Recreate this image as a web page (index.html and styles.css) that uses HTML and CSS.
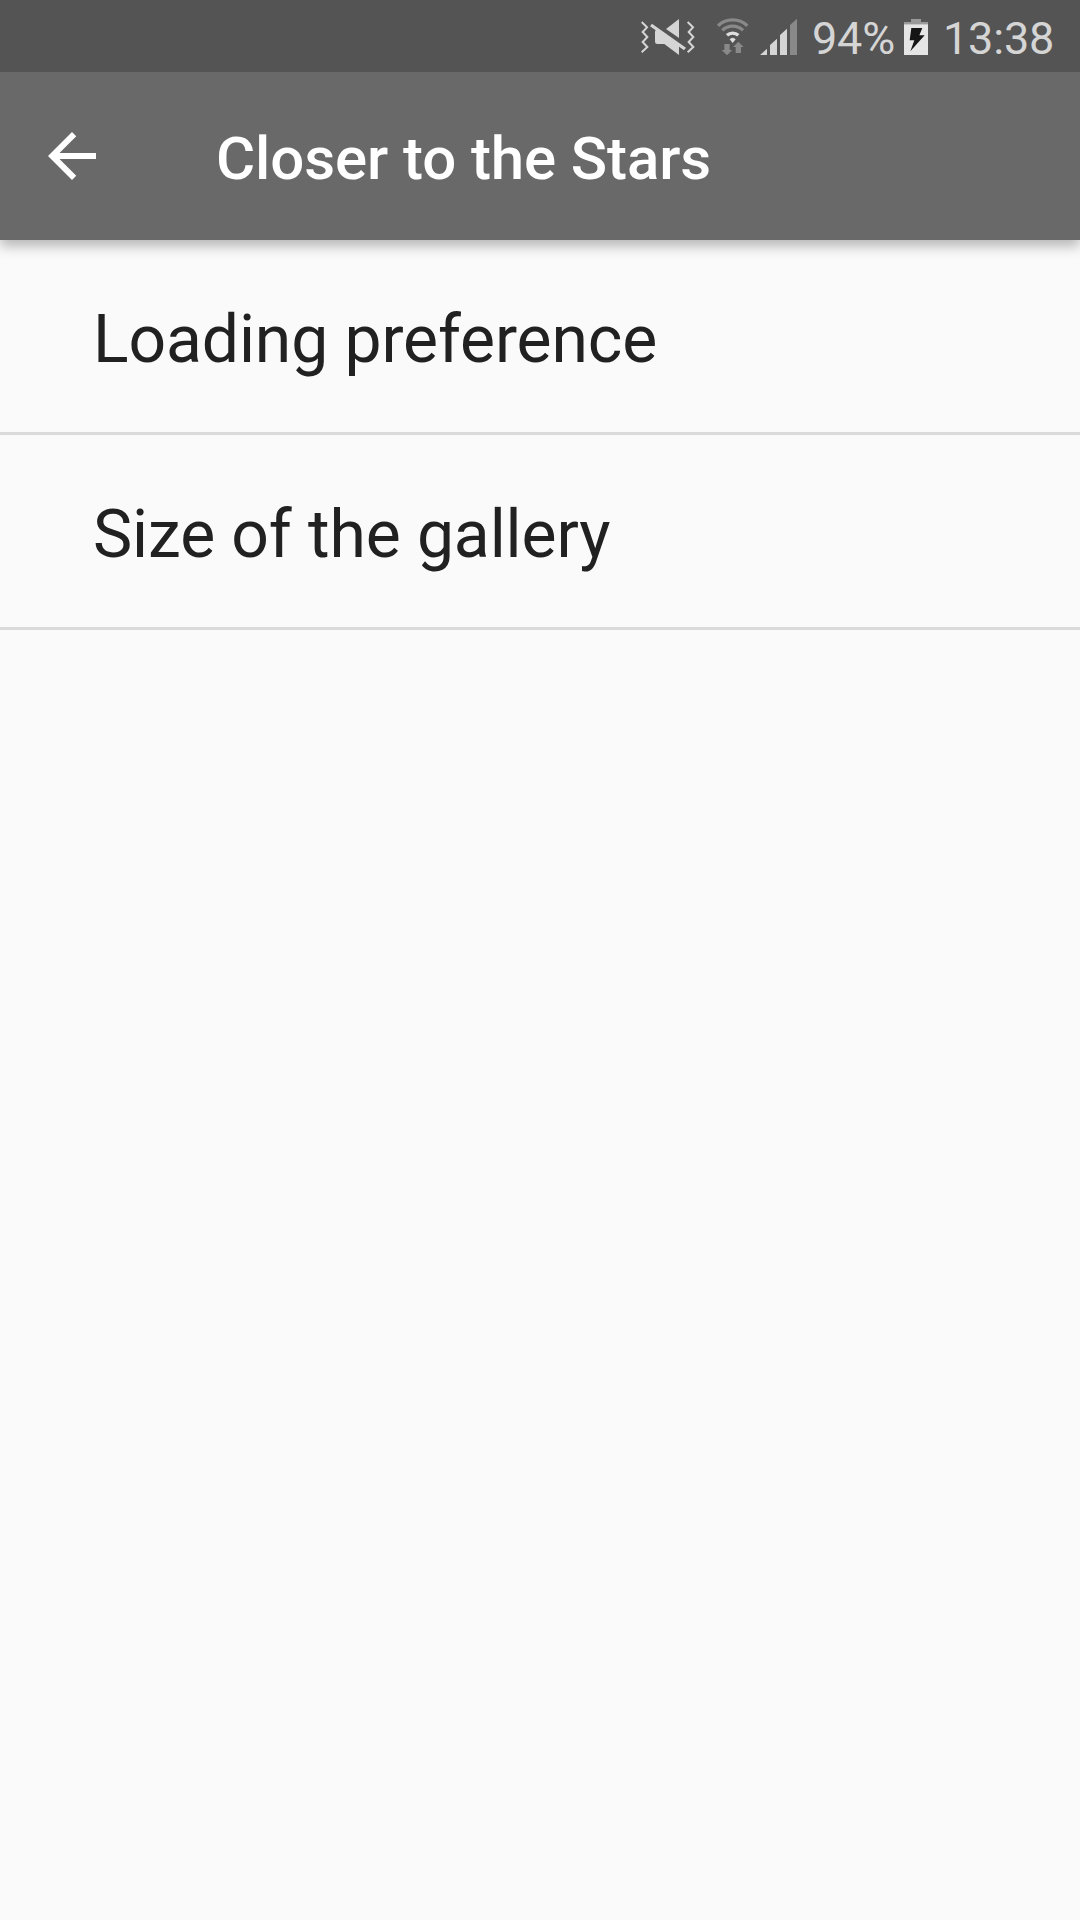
FILE: index.html
```html
<!DOCTYPE html>
<html lang="en">
<head>
<meta charset="utf-8">
<title>Closer to the Stars</title>
<link rel="stylesheet" href="styles.css">
</head>
<body>
<div class="status-bar">
  <svg class="icon-mute" viewBox="33 54 165 114" aria-hidden="true">
    <g fill="none" stroke="#d5d5d5" stroke-width="6">
      <path d="M35 66 51 82 38 96 52 111 38 126 52 141 35 157"/>
      <path d="M173 66 189 82 176 96 190 111 176 126 190 141 173 157"/>
    </g>
    <path fill="#d5d5d5" d="M108 87 147 57V114ZM79 90H86L147 134V165L103 132H82Q75 132 75 125V95Q75 90 79 90Z"/>
    <path fill="none" stroke="#d5d5d5" stroke-width="10" d="M63 75 165 147"/>
  </svg>
  <svg class="icon-wifi" viewBox="258 51 99 117" aria-hidden="true">
    <g fill="none" stroke="#898989" stroke-width="10">
      <path d="M264 77A65 65 0 0 1 352 77"/>
      <path d="M277 91A45 45 0 0 1 339 91"/>
    </g>
    <path fill="none" stroke="#dedede" stroke-width="10" d="M291 106A25 25 0 0 1 325 106"/>
    <path fill="#dedede" d="M299 118Q308 109 317 118L308 129Z"/>
    <path fill="#898989" d="M283 132H299V150H307L291 166 275 150H283ZM317 159V141H309L325 125 341 141H333V159Z"/>
  </svg>
  <svg class="icon-signal" viewBox="390 54 111 114" aria-hidden="true">
    <path fill="#d5d5d5" d="M390 165 411 146V165ZM420 165V135L441 116V165ZM450 165V105L471 86V165Z"/>
    <path fill="#898989" d="M480 165V75L501 56V165Z"/>
  </svg>
  <span class="battery-level">94%</span>
  <svg class="icon-battery" viewBox="342 54 72 114" aria-hidden="true">
    <path fill="#999" d="M363 57H393V66H414V74H342V66H363Z"/>
    <path fill="#e5e5e5" d="M342 73H414V165H342Z"/>
    <path fill="#151515" d="M364 84H397L388 106H404L361 154 373 121H359Z"/>
  </svg>
  <span class="clock">13:38</span>
</div>
<header class="app-bar">
  <svg class="icon-back" viewBox="4 4 16 16" aria-label="Back">
    <path fill="#fff" d="M20 11H7.83l5.59-5.59L12 4l-8 8 8 8 1.41-1.41L7.83 13H20v-2z"/>
  </svg>
  <h1 class="title">Closer to the Stars</h1>
</header>
<main class="preferences">
  <div class="preference">Loading preference</div>
  <div class="preference">Size of the gallery</div>
</main>
</body>
</html>
```
FILE: styles.css
```css
* { box-sizing: border-box; }

body {
  margin: 0;
  min-height: 1920px;
  background: #fafafa;
  font-family: Roboto, "Liberation Sans", sans-serif;
  overflow: hidden;
}

svg { display: block; flex: none; }

.status-bar {
  display: flex;
  justify-content: flex-start;
  height: 72px;
  padding-left: 641px;
  background: #545454;
  color: #d5d5d5;
  font-size: 45px;
  line-height: 77px;
  white-space: nowrap;
}

.icon-mute { width: 55px; height: 38px; margin-top: 18px; }
.icon-wifi { width: 33px; height: 39px; margin: 17px 0 0 20px; }
.icon-signal { width: 37px; height: 38px; margin: 18px 0 0 11px; }
.battery-level { width: 81px; margin-left: 15px; letter-spacing: -0.2px; }
.icon-battery { width: 24px; height: 38px; margin: 18px 0 0 11px; }
.clock { margin-left: 15px; letter-spacing: -0.2px; }

.app-bar {
  position: relative;
  display: flex;
  align-items: center;
  height: 168px;
  padding-left: 48px;
  background: #696969;
  box-shadow: 0 6px 12px rgba(0, 0, 0, 0.28);
  /* the shadow falls only below the bar */
  clip-path: inset(0 0 -30px 0);
}

.icon-back { width: 48px; height: 48px; }

.title {
  margin: 0 0 0 120px;
  padding-top: 5px;
  color: #fff;
  font-size: 60px;
  font-weight: 500;
  line-height: 72px;
  letter-spacing: -0.1px;
}

.preference {
  height: 195px;
  padding: 4px 0 0 93px;
  border-bottom: 3px solid #dadada;
  color: #212121;
  font-size: 66px;
  line-height: 192px;
  letter-spacing: -0.1px;
}
```
